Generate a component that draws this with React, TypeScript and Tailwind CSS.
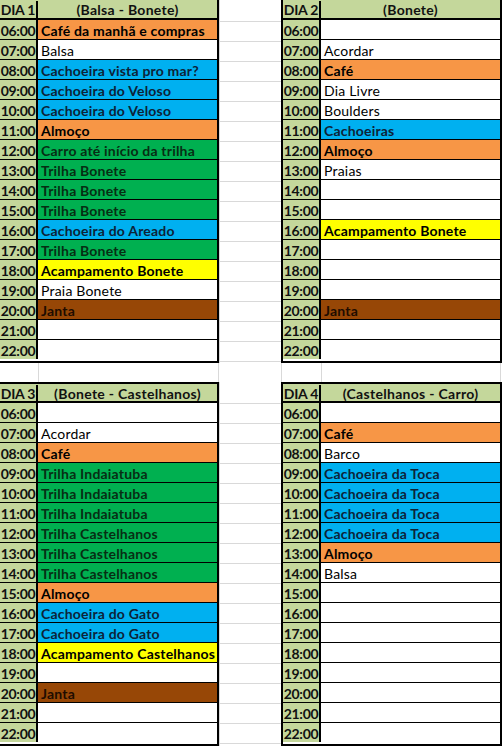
import React from "react";

// --- planilha do roteiro (4 dias) ------------------------------------------

type Kind = "o" | "b" | "g" | "y" | "j" | "w";

const CELL: Record<Kind, string> = {
  o: "bg-[#f79646] font-bold text-black",
  b: "bg-[#00b0f0] font-bold text-[#0d2338]",
  g: "bg-[#00b050] font-bold text-[#072e14]",
  y: "bg-[#ffff00] font-bold text-black",
  j: "bg-[#974706] font-bold text-[#1e0c00]",
  w: "bg-white font-normal text-black",
};

type Item = [string, Kind];

const HOURS = Array.from({ length: 17 }, (_, i) => `${String(i + 6).padStart(2, "0")}:00`);

const e: Item = ["", "w"];

const DAYS: { day: string; title: string; items: Item[] }[] = [
  {
    day: "DIA 1",
    title: "(Balsa - Bonete)",
    items: [
      ["Café da manhã e compras", "o"],
      ["Balsa", "w"],
      ["Cachoeira vista pro mar?", "b"],
      ["Cachoeira do Veloso", "b"],
      ["Cachoeira do Veloso", "b"],
      ["Almoço", "o"],
      ["Carro até início da trilha", "g"],
      ["Trilha Bonete", "g"],
      ["Trilha Bonete", "g"],
      ["Trilha Bonete", "g"],
      ["Cachoeira do Areado", "b"],
      ["Trilha Bonete", "g"],
      ["Acampamento Bonete", "y"],
      ["Praia Bonete", "w"],
      ["Janta", "j"],
      e,
      e,
    ],
  },
  {
    day: "DIA 2",
    title: "(Bonete)",
    items: [
      e,
      ["Acordar", "w"],
      ["Café", "o"],
      ["Dia Livre", "w"],
      ["Boulders", "w"],
      ["Cachoeiras", "b"],
      ["Almoço", "o"],
      ["Praias", "w"],
      e,
      e,
      ["Acampamento Bonete", "y"],
      e,
      e,
      e,
      ["Janta", "j"],
      e,
      e,
    ],
  },
  {
    day: "DIA 3",
    title: "(Bonete - Castelhanos)",
    items: [
      e,
      ["Acordar", "w"],
      ["Café", "o"],
      ["Trilha Indaiatuba", "g"],
      ["Trilha Indaiatuba", "g"],
      ["Trilha Indaiatuba", "g"],
      ["Trilha Castelhanos", "g"],
      ["Trilha Castelhanos", "g"],
      ["Trilha Castelhanos", "g"],
      ["Almoço", "o"],
      ["Cachoeira do Gato", "b"],
      ["Cachoeira do Gato", "b"],
      ["Acampamento Castelhanos", "y"],
      e,
      ["Janta", "j"],
      e,
      e,
    ],
  },
  {
    day: "DIA 4",
    title: "(Castelhanos - Carro)",
    items: [
      e,
      ["Café", "o"],
      ["Barco", "w"],
      ["Cachoeira da Toca", "b"],
      ["Cachoeira da Toca", "b"],
      ["Cachoeira da Toca", "b"],
      ["Cachoeira da Toca", "b"],
      ["Almoço", "o"],
      ["Balsa", "w"],
      e,
      e,
      e,
      e,
      e,
      e,
      e,
      e,
    ],
  },
];

type DayProps = {
  day: string;
  title: string;
  items: Item[];
  left?: boolean; // tabela encostada na borda esquerda (borda cortada)
  top?: boolean; // com borda superior
  headH: string;
};

const DayTable: React.FC<DayProps> = ({ day, title, items, left, top, headH }) => (
  <div
    className={`flex flex-col border-black border-r-2 border-b-2 ${left ? "w-[219px]" : "w-[221px] border-l-2"} ${top ? "border-t-2" : ""}`}
  >
    <div className={`flex ${headH} border-b-2 border-black bg-[#c4d79b] pt-[1px] font-bold text-[#111]`}>
      <div className="flex w-[38px] shrink-0 items-center justify-center border-r-2 border-black tracking-[-0.2px]">
        {day}
      </div>
      <div className="flex flex-1 items-center justify-center tracking-[0.3px]">{title}</div>
    </div>
    {items.map(([text, kind], i) => (
      <div key={i} className={`flex h-[19px] ${i > 0 ? "box-content border-t border-black" : ""}`}>
        <div className="flex w-[38px] shrink-0 items-center justify-center border-r-2 border-black bg-[#c4d79b] pt-[1px] font-bold tracking-[-0.3px] text-[#111]">
          {HOURS[i]}
        </div>
        <div
          className={`flex flex-1 items-center overflow-hidden whitespace-nowrap pl-[3px] pt-[1px] tracking-[0.2px] ${CELL[kind]}`}
        >
          {text}
        </div>
      </div>
    ))}
  </div>
);

// coluna vazia entre as tabelas, só com as linhas de grade do Excel
const GapCol: React.FC<{ tail: string }> = ({ tail }) => (
  <div className="flex w-[62px] flex-col border-l border-[#d9d9d9]">
    <div className="box-content h-[21px] border-b border-[#d9d9d9]" />
    {HOURS.map((h) => (
      <div key={h} className="box-content h-[19px] border-b border-[#d9d9d9]" />
    ))}
    <div className={tail} />
  </div>
);

export default function App() {
  return (
    <div className="h-[748px] w-[503px] overflow-hidden bg-white font-['Lato',sans-serif] text-[14px] leading-[19px]">
      <div className="flex">
        <DayTable {...DAYS[0]} left headH="h-[20px]" />
        <GapCol tail="h-[1px]" />
        <DayTable {...DAYS[1]} headH="h-[20px]" />
      </div>
      <div className="flex h-[19px]">
        <div className="w-[39px] border-r border-[#d9d9d9]" />
        <div className="w-[180px] border-r border-[#d9d9d9]" />
        <div className="w-[62px]" />
        <div className="w-[41px] border-x border-[#d9d9d9]" />
        <div className="w-[179px] border-r border-[#d9d9d9]" />
      </div>
      <div className="flex">
        <DayTable {...DAYS[2]} left top headH="h-[19px]" />
        <GapCol tail="h-[2px]" />
        <DayTable {...DAYS[3]} top headH="h-[19px]" />
      </div>
    </div>
  );
}
